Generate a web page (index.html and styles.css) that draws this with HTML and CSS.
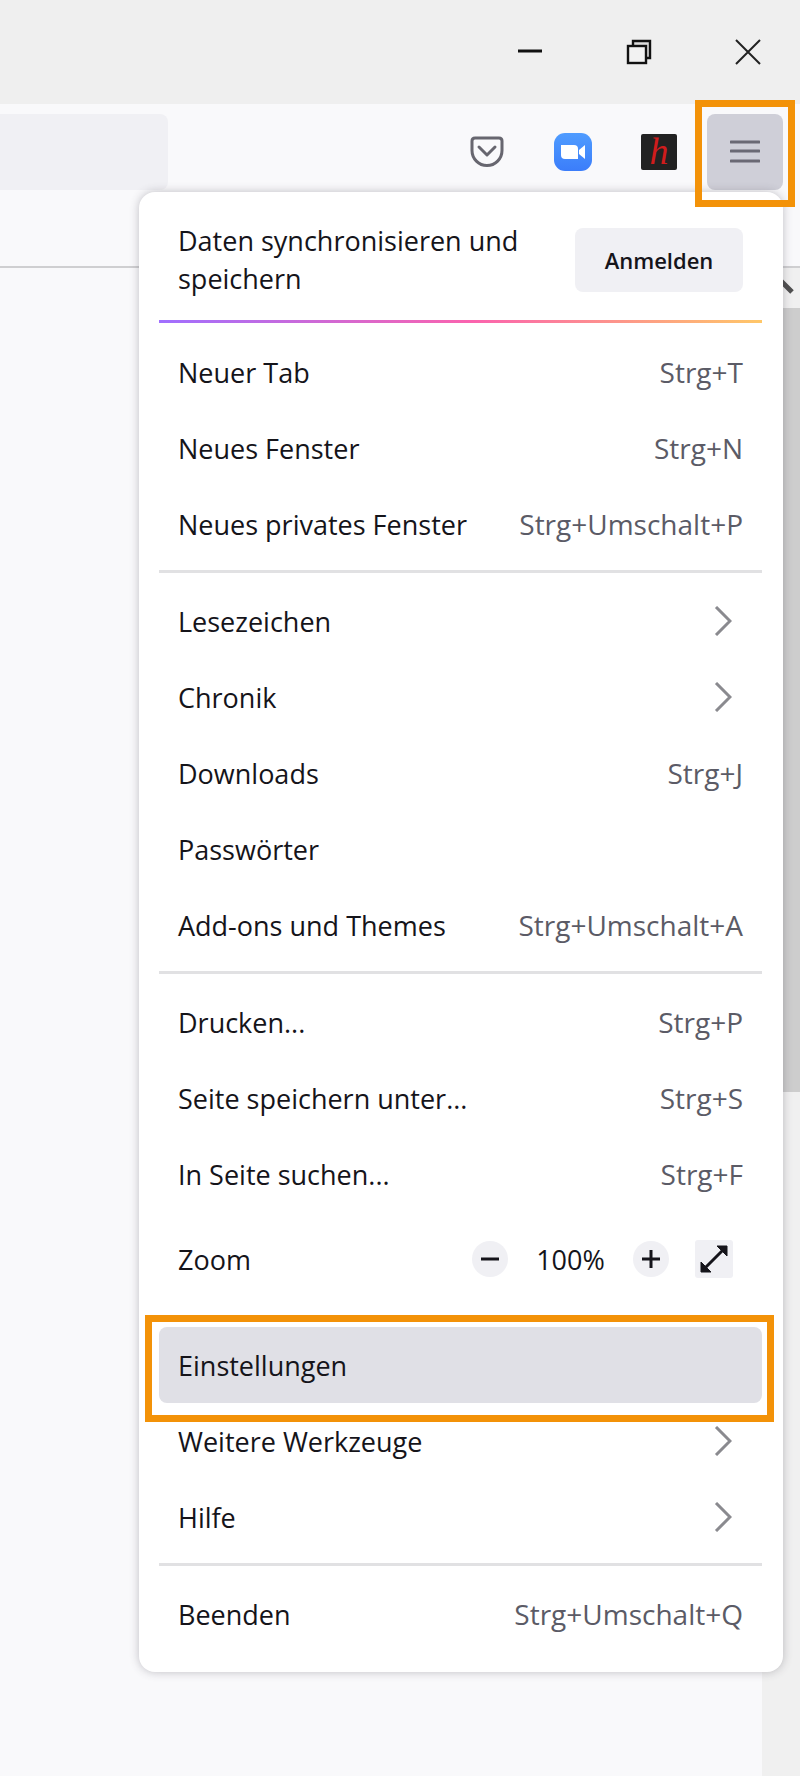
FILE: index.html
```html
<!DOCTYPE html>
<html lang="de">
<head>
    <meta charset="UTF-8">
    <meta name="viewport" content="width=device-width, initial-scale=1.0">
    <title>Firefox Menü</title>
    <link rel="stylesheet" href="styles.css">
</head>
<body>

    <div class="window">
        <div class="titlebar">
            <button class="window-btn" aria-label="Minimieren">
                <svg width="26" height="26" viewBox="0 0 26 26"><path d="M1 12h24" stroke="#111" stroke-width="3"/></svg>
            </button>
            <button class="window-btn" aria-label="Verkleinern">
                <svg width="26" height="26" viewBox="0 0 26 26" fill="none" stroke="#111" stroke-width="2.4">
                    <path d="M7 6V2h17v17h-4" fill="#dcdcdc"/>
                    <rect x="2" y="7" width="18" height="17" fill="#f2f2f2"/>
                </svg>
            </button>
            <button class="window-btn" aria-label="Schließen">
                <svg width="26" height="26" viewBox="0 0 26 26"><path d="M1 1l24 24M25 1L1 25" stroke="#222" stroke-width="2"/></svg>
            </button>
        </div>

        <div class="toolbar">
            <div class="urlbar"></div>
            <button class="tool-btn" aria-label="Pocket">
                <svg width="34" height="32" viewBox="0 0 34 32" fill="none" stroke="#67666f" stroke-width="3" stroke-linecap="round" stroke-linejoin="round">
                    <path d="M5 2h24q3 0 3 3v9.500a15 15 0 0 1-30 0V5q0-3 3-3z"/>
                    <path d="M9 11l8 8 8-8"/>
                </svg>
            </button>
            <button class="tool-btn" aria-label="Zoom Meetings">
                <svg width="38" height="38" viewBox="0 0 38 38">
                    <defs>
                        <linearGradient id="blue" x1="0" y1="0" x2="0" y2="1">
                            <stop offset="0" stop-color="#4f9cff"/>
                            <stop offset="1" stop-color="#3b7dfa"/>
                        </linearGradient>
                    </defs>
                    <rect width="38" height="38" rx="11" fill="url(#blue)"/>
                    <path d="M7 12h13q4 0 4 4v10H11q-4 0-4-4z" fill="#fff"/>
                    <path d="M25 17l6-5v14l-6-5z" fill="#fff"/>
                </svg>
            </button>
            <button class="tool-btn" aria-label="Hypothesis">
                <span class="h-icon">h</span>
            </button>
            <div class="menu-anchor">
                <button class="tool-btn active" aria-label="Anwendungsmenü">
                    <svg width="30" height="24" viewBox="0 0 30 24"><path d="M1 2h28M1 11h28M1 21h28" stroke="#6a6974" stroke-width="3" stroke-linecap="round"/></svg>
                </button>
                <div class="mark mark-button"></div>
            </div>

            <div class="menu">
                <div class="menu-header">
                    <span class="sync-text">Daten synchronisieren und speichern</span>
                    <button class="login-btn">Anmelden</button>
                </div>
                <div class="rainbow"></div>

                <button class="item"><span>Neuer Tab</span><span class="key">Strg+T</span></button>
                <button class="item"><span>Neues Fenster</span><span class="key">Strg+N</span></button>
                <button class="item"><span>Neues privates Fenster</span><span class="key">Strg+Umschalt+P</span></button>

                <hr>

                <button class="item"><span>Lesezeichen</span><svg class="arrow" viewBox="0 0 18 30"><path d="M2 1l14 14L2 29"/></svg></button>
                <button class="item"><span>Chronik</span><svg class="arrow" viewBox="0 0 18 30"><path d="M2 1l14 14L2 29"/></svg></button>
                <button class="item"><span>Downloads</span><span class="key">Strg+J</span></button>
                <button class="item"><span>Passwörter</span></button>
                <button class="item"><span>Add-ons und Themes</span><span class="key">Strg+Umschalt+A</span></button>

                <hr>

                <button class="item"><span>Drucken...</span><span class="key">Strg+P</span></button>
                <button class="item"><span>Seite speichern unter...</span><span class="key">Strg+S</span></button>
                <button class="item"><span>In Seite suchen...</span><span class="key">Strg+F</span></button>

                <div class="item zoom-row">
                    <span>Zoom</span>
                    <div class="zoom-controls">
                        <button class="round-btn" aria-label="Verkleinern">
                            <svg width="20" height="20" viewBox="0 0 20 20"><path d="M1 10h18" stroke="#15141a" stroke-width="3"/></svg>
                        </button>
                        <span class="zoom-value">100%</span>
                        <button class="round-btn" aria-label="Vergrößern">
                            <svg width="20" height="20" viewBox="0 0 20 20"><path d="M1 10h18M10 1v18" stroke="#15141a" stroke-width="3"/></svg>
                        </button>
                        <button class="full-btn" aria-label="Vollbild">
                            <svg width="30" height="30" viewBox="0 0 30 30" fill="#15141a" stroke="#15141a" stroke-linejoin="round">
                                <path d="M5 25L25 5" stroke-width="3"/>
                                <path d="M18 2h10v10zM2 18v10h10z" stroke-width="1"/>
                            </svg>
                        </button>
                    </div>
                </div>

                <div class="marked-item">
                    <button class="item selected"><span>Einstellungen</span></button>
                    <div class="mark mark-item"></div>
                </div>
                <button class="item"><span>Weitere Werkzeuge</span><svg class="arrow" viewBox="0 0 18 30"><path d="M2 1l14 14L2 29"/></svg></button>
                <button class="item"><span>Hilfe</span><svg class="arrow" viewBox="0 0 18 30"><path d="M2 1l14 14L2 29"/></svg></button>

                <hr>

                <button class="item"><span>Beenden</span><span class="key">Strg+Umschalt+Q</span></button>
            </div>
        </div>

        <div class="content">
            <div class="page"></div>
            <div class="scrollbar">
                <svg class="scroll-up" width="38" height="40" viewBox="0 0 38 40"><path d="M8 24l11-11 11 11" fill="none" stroke="#505050" stroke-width="5"/></svg>
                <div class="thumb"></div>
            </div>
        </div>
    </div>

</body>
</html>
```
FILE: styles.css
```css
* {
    box-sizing: border-box;
}

body {
    margin: 0;
    font-family: "Open Sans", "Noto Sans", sans-serif;
    font-size: 26px;
    color: #15141a;
    background: #f9f9fb;
}

button {
    font-family: inherit;
    font-size: inherit;
    color: inherit;
    border: none;
    background: none;
    padding: 0;
    cursor: pointer;
}

svg {
    display: block;
}

.window {
    display: flex;
    flex-direction: column;
    min-height: 100vh;
}

.titlebar {
    display: flex;
    justify-content: flex-end;
    gap: 4px;
    height: 104px;
    background: #efefef;
}

.window-btn {
    display: flex;
    justify-content: center;
    align-items: center;
    width: 105px;
}

.toolbar {
    position: relative;
    display: flex;
    align-items: flex-start;
    gap: 10px;
    height: 164px;
    padding: 10px 17px 0 0;
    border-bottom: 2px solid #cfcfd1;
}

.urlbar {
    width: 168px;
    height: 76px;
    margin-right: auto;
    background: #f0f0f4;
    border-radius: 0 8px 8px 0;
}

.tool-btn {
    display: flex;
    justify-content: center;
    align-items: center;
    width: 76px;
    height: 76px;
    border-radius: 8px;
}

.tool-btn.active {
    background: #cfcfd8;
}

.h-icon {
    width: 36px;
    height: 36px;
    border-radius: 2px;
    background: #222;
    color: #d01c1c;
    font-family: "Liberation Serif", serif;
    font-style: italic;
    font-size: 38px;
    line-height: 34px;
}

.menu-anchor {
    position: relative;
}

/* orange markers */
.mark {
    position: absolute;
    z-index: 2;
    border: 7px solid #f39208;
    pointer-events: none;
}

.mark-button {
    top: -14px;
    right: -12px;
    bottom: -17px;
    left: -12px;
}

.mark-item {
    top: -12px;
    right: -12px;
    bottom: -19px;
    left: -14px;
}

/* menu */
.menu {
    position: absolute;
    z-index: 1;
    top: 88px;
    right: 17px;
    width: 644px;
    padding: 0 21px 20px 20px;
    background: #fff;
    border-radius: 16px;
    box-shadow: 0 0 10px rgba(58, 57, 68, 0.3);
}

.menu-header {
    display: flex;
    justify-content: space-between;
    align-items: center;
    height: 128px;
    padding: 8px 19px 0;
}

.sync-text {
    max-width: 350px;
    font-size: 27px;
    font-weight: 500;
    line-height: 38px;
}

.login-btn {
    width: 168px;
    height: 64px;
    border-radius: 8px;
    background: #f0f0f4;
    font-size: 22px;
    font-weight: 600;
}

.rainbow {
    height: 3px;
    margin-bottom: 11px;
    background: linear-gradient(90deg, #a06fff, #fb63ae 52%, #ffc768);
}

.item {
    display: flex;
    justify-content: space-between;
    align-items: center;
    width: 100%;
    height: 76px;
    padding: 0 19px;
    border-radius: 8px;
    font-size: 27px;
    text-align: left;
    white-space: nowrap;
}

.item.selected {
    background: #e0e0e6;
}

.key {
    font-size: 28px;
    color: #5b5b66;
}

.arrow {
    width: 18px;
    height: 30px;
    margin-right: 11px;
    fill: none;
    stroke: #8a8a8f;
    stroke-width: 3;
}

.menu hr {
    height: 3px;
    margin: 8px 0 10px;
    border: none;
    background: #e1e1e3;
}

.marked-item {
    position: relative;
}

.zoom-row {
    height: 94px;
    margin-bottom: 21px;
}

.zoom-controls {
    display: flex;
    align-items: center;
    margin-right: 10px;
}

.zoom-value {
    width: 125px;
    text-align: center;
}

.round-btn,
.full-btn {
    display: flex;
    justify-content: center;
    align-items: center;
    width: 36px;
    height: 36px;
    border-radius: 50%;
    background: #f0f0f4;
}

.full-btn {
    width: 38px;
    height: 38px;
    margin-left: 26px;
    border-radius: 3px;
}

/* page area */
.content {
    flex: 1;
    display: flex;
}

.page {
    flex: 1;
}

.scrollbar {
    width: 38px;
    background: #f0f0f0;
}

.thumb {
    height: 52%;
    background: #cdcdcd;
}
```
